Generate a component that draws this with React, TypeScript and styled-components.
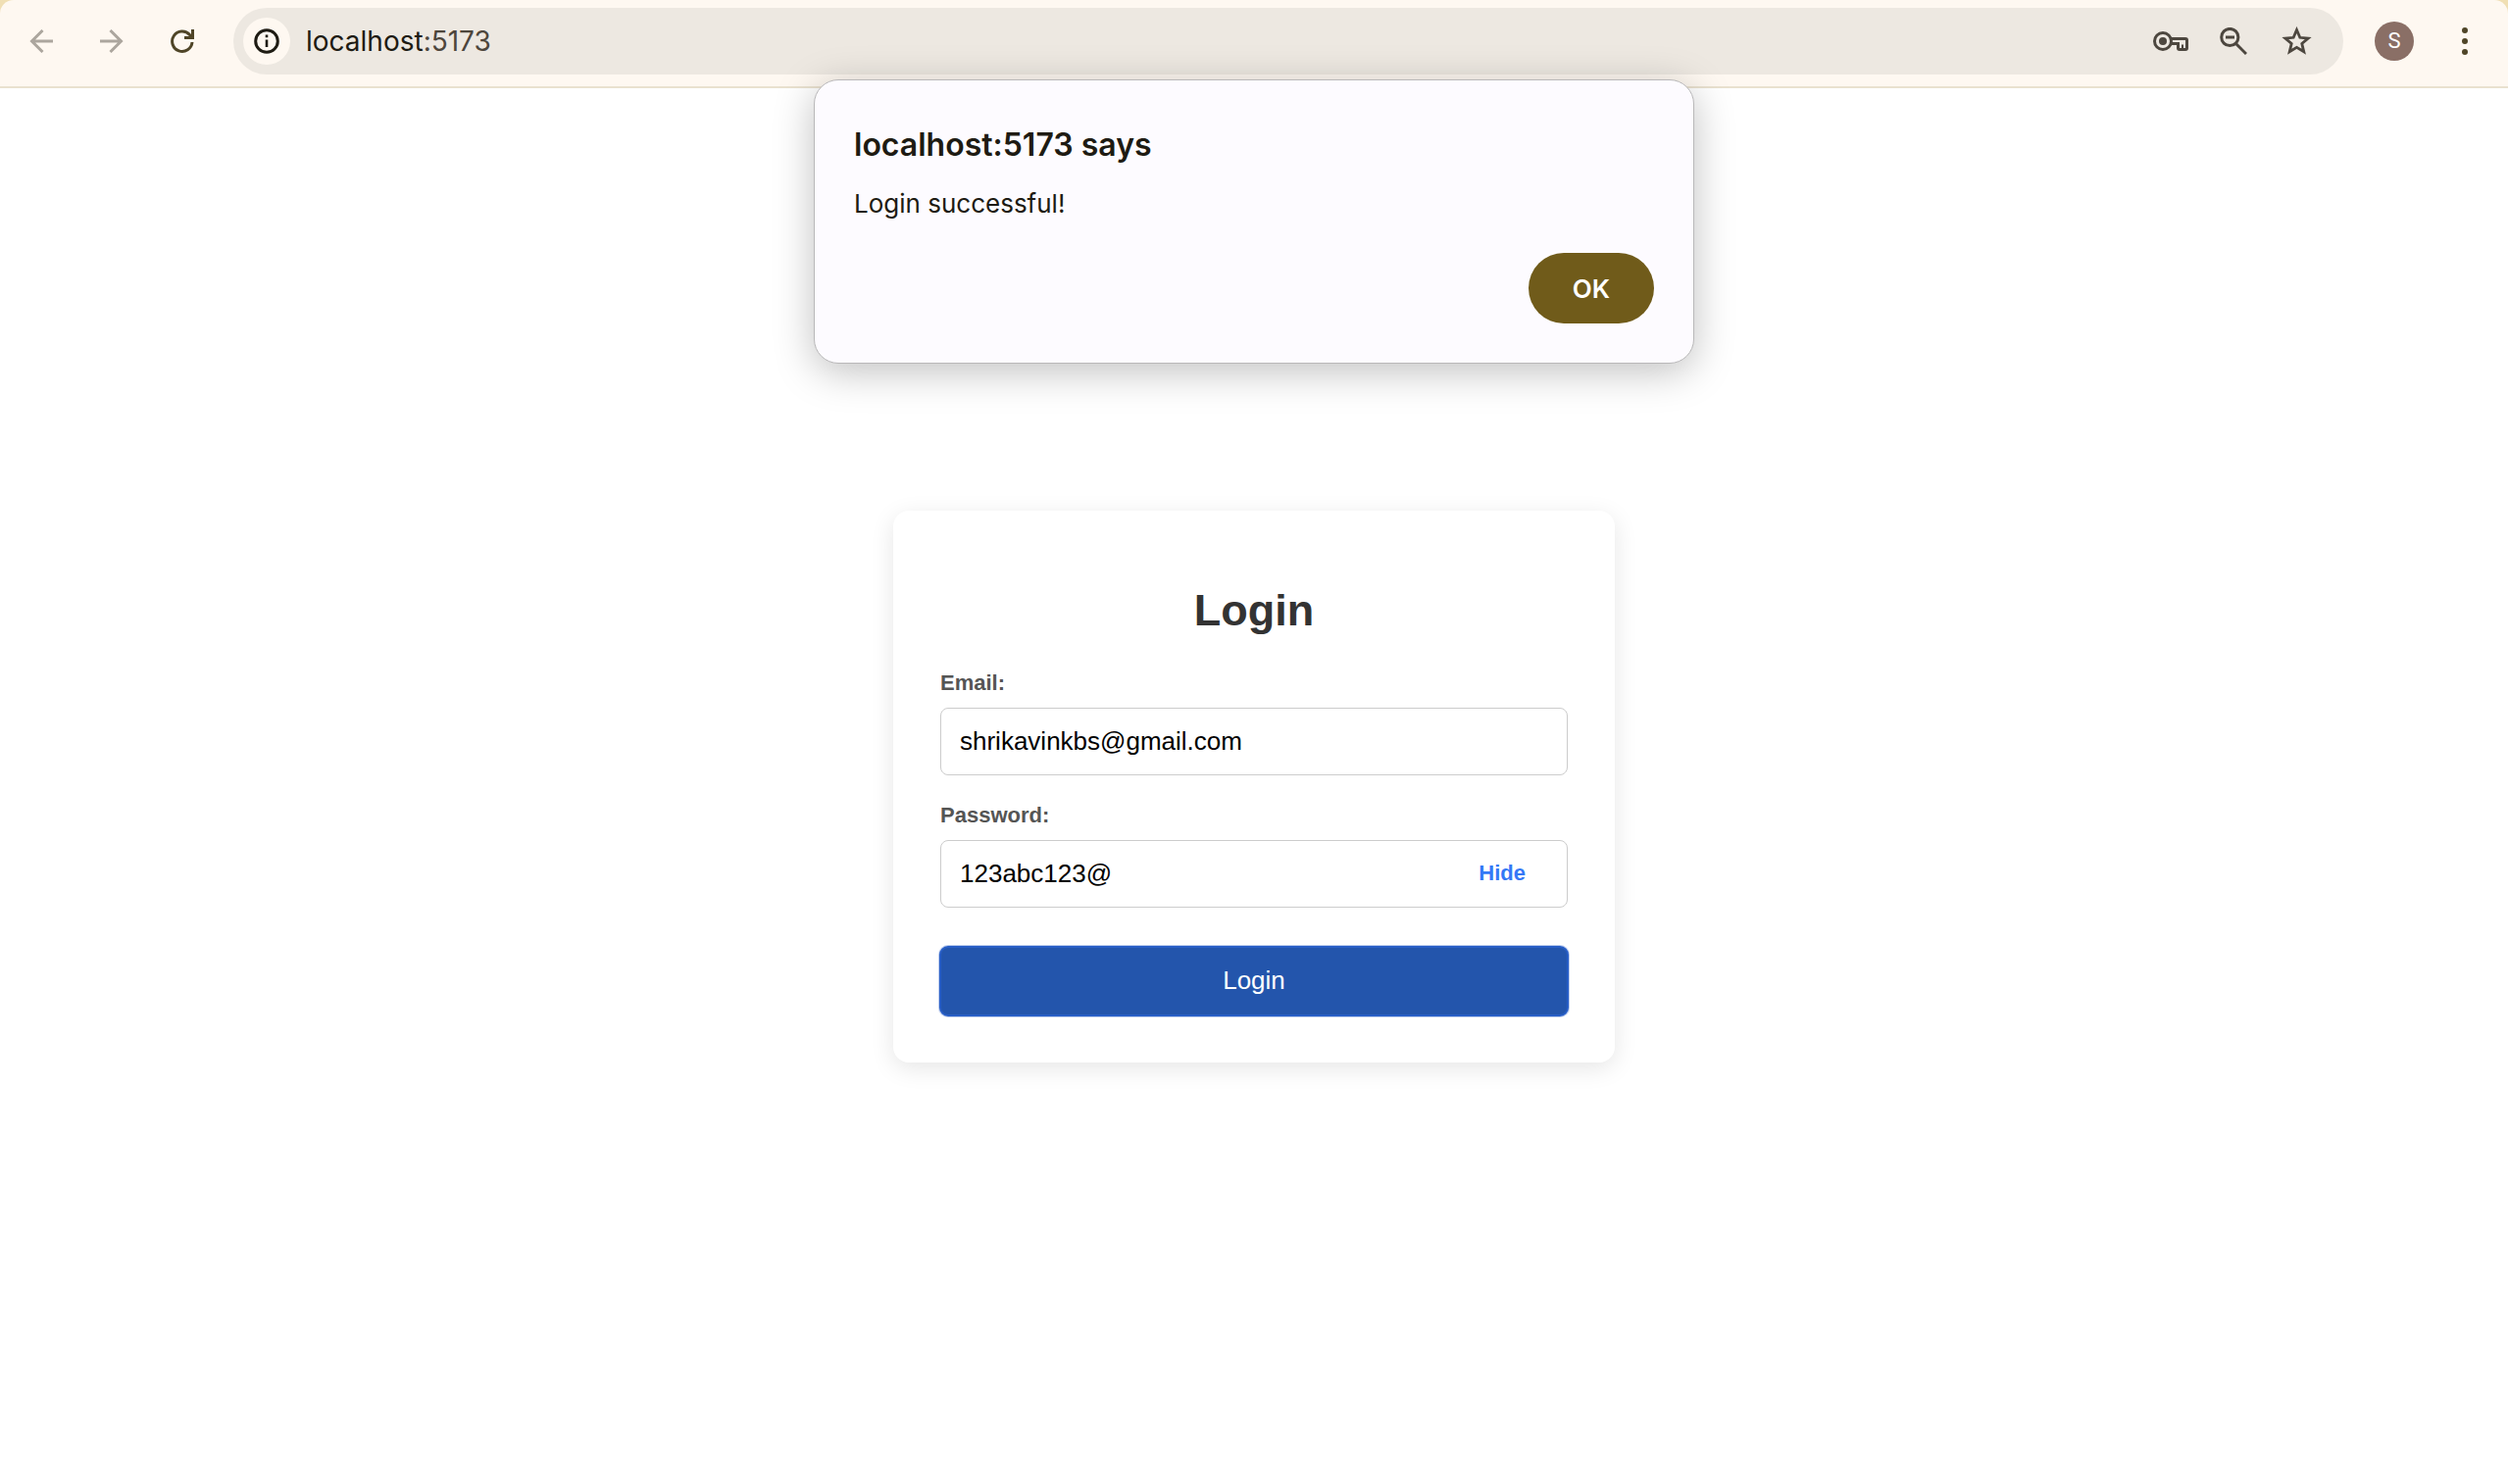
import React, { useId, useState } from "react";
import styled, { createGlobalStyle } from "styled-components";

const uiFont = `Inter, Roboto, "Liberation Sans", sans-serif`;
const pageFont = `"Liberation Sans", Arial, sans-serif`;

const GlobalStyle = createGlobalStyle`
  *, *::before, *::after { box-sizing: border-box; }
  body { margin: 0; background: #ffffff; font-family: ${pageFont}; }
  button, input { font: inherit; }
`;

const Window = styled.div`
  position: relative;
  display: flex;
  flex-direction: column;
  min-height: 100vh;
`;

const TabStripEdge = styled.div`
  background: #f0dfb4;
`;

const Toolbar = styled.header`
  display: flex;
  align-items: center;
  padding: 8px 20px 12px 18px;
  background: #fef8f1;
  border-bottom: 2px solid #e9e1cf;
  border-radius: 14px 14px 0 0;
  font-family: ${uiFont};
`;

const NavGroup = styled.nav`
  display: flex;
  gap: 24px;
  margin-right: 28px;
`;

const IconButton = styled.button<{ $tone?: string }>`
  display: grid;
  place-items: center;
  width: 48px;
  height: 48px;
  padding: 0;
  border: 0;
  border-radius: 50%;
  background: transparent;
  color: ${(p) => p.$tone ?? "#4d473f"};

  svg { display: block; }
`;

const Omnibox = styled.div`
  display: flex;
  flex: 1;
  align-items: center;
  height: 68px;
  padding: 0 24px 0 10px;
  border-radius: 34px;
  background: #ede8e1;
`;

const SiteInfo = styled(IconButton)`
  background: #fef8f1;
`;

const Address = styled.div`
  flex: 1;
  margin-left: 16px;
  font-size: 28px;
  line-height: 36px;
  color: #1e1b13;
`;

const Port = styled.span`
  color: #4d463c;
`;

const OmniboxActions = styled.div`
  display: flex;
  gap: 16px;
`;

const Avatar = styled.button`
  width: 40px;
  height: 40px;
  margin: 0 28px 0 32px;
  padding: 0;
  border: 0;
  border-radius: 50%;
  background: #8a6f66;
  color: #ffffff;
  font-family: Roboto, sans-serif;
  font-size: 22px;
  line-height: 40px;
`;

const Page = styled.main`
  display: flex;
  flex: 1;
  align-items: center;
  justify-content: center;
`;

const Card = styled.form`
  display: flex;
  flex-direction: column;
  width: 736px;
  max-width: 100%;
  padding: 48px;
  border-radius: 16px;
  background: #ffffff;
  box-shadow: 0 6px 24px rgba(0, 0, 0, 0.1);
`;

const Heading = styled.h2`
  margin: 28px 0 35px;
  color: #333333;
  font-size: 45px;
  line-height: 52px;
  text-align: center;
`;

const Field = styled.div`
  display: flex;
  flex-direction: column;
  gap: 13px;
  margin-bottom: 28px;
`;

const Label = styled.label`
  color: #555555;
  font-size: 22px;
  font-weight: 700;
  line-height: 25px;
`;

const InputFrame = styled.div`
  display: flex;
  align-items: center;
  height: 69px;
  padding: 0 19px;
  border: 1px solid #cccccc;
  border-radius: 8px;
`;

const TextInput = styled.input`
  flex: 1;
  min-width: 0;
  padding: 0;
  border: 0;
  outline: 0;
  background: transparent;
  color: #000000;
  font-size: 26px;
  line-height: 30px;
`;

const ToggleButton = styled.button`
  padding: 0 23px;
  border: 0;
  background: transparent;
  color: #3478f6;
  font-size: 22px;
  font-weight: 700;
  line-height: 26px;
`;

const SubmitButton = styled.button`
  height: 70px;
  margin-top: 12px;
  border: 0;
  border-radius: 8px;
  outline: 2px solid #285ec6;
  outline-offset: -1px;
  background: #2355ac;
  box-shadow: 0 0 0 2px rgba(40, 94, 198, 0.3);
  color: #ffffff;
  font-size: 26px;
`;

const Dialog = styled.section`
  position: absolute;
  top: 81px;
  left: 50%;
  width: 898px;
  max-width: 100%;
  transform: translateX(-50%);
  padding: 40px;
  border: 1px solid #b9b8b9;
  border-radius: 25px;
  background: #fdfbff;
  box-shadow: 0 8px 40px rgba(0, 0, 0, 0.25);
  color: #1e1b13;
  font-family: ${uiFont};
`;

const DialogTitle = styled.h1`
  margin: 6px 0 22px;
  font-size: 32px;
  font-weight: 600;
  line-height: 40px;
`;

const DialogText = styled.p`
  margin: 0 0 32px;
  font-size: 26px;
  line-height: 36px;
`;

const DialogActions = styled.div`
  display: flex;
  justify-content: flex-end;
`;

const OkButton = styled.button`
  width: 128px;
  height: 72px;
  border: 0;
  border-radius: 36px;
  background: #705b1a;
  color: #ffffff;
  font-size: 26px;
  font-weight: 600;
`;

const BackIcon = () => (
  <svg width="24" height="24" viewBox="0 0 24 24" fill="none" stroke="currentColor" strokeWidth="3">
    <path d="M24 12H2M13.500 1L2.500 12L13.500 23" />
  </svg>
);

const ForwardIcon = () => (
  <svg width="24" height="24" viewBox="0 0 24 24" fill="none" stroke="currentColor" strokeWidth="3">
    <path d="M0 12H22M10.500 1L21.500 12L10.500 23" />
  </svg>
);

const ReloadIcon = () => (
  <svg width="24" height="24" viewBox="0 0 24 24" fill="none" stroke="currentColor" strokeWidth="3">
    <path d="M22 13A10.200 10.200 0 1 1 19.500 5.500L22 8M22.500 0V8.500H14" />
  </svg>
);

const InfoIcon = () => (
  <svg width="26" height="26" viewBox="0 0 26 26" fill="none" stroke="currentColor" strokeWidth="3">
    <circle cx="13" cy="13" r="11.300" />
    <path d="M13 11.500V19M13 6.500V9.300" strokeWidth="2.600" />
  </svg>
);

const KeyIcon = () => (
  <svg width="36" height="22" viewBox="0 0 36 22" fill="none" stroke="currentColor" strokeWidth="3">
    <circle cx="10" cy="11" r="8.500" />
    <circle cx="10" cy="11" r="4" fill="currentColor" stroke="none" />
    <path d="M18 8.500H33Q34.500 8.500 34.500 10V18Q34.500 19.500 33 19.500H27Q25.500 19.500 25.500 18V13.500H18" />
    <path d="M30 14.500V19" strokeWidth="2" />
  </svg>
);

const ZoomOutIcon = () => (
  <svg width="28" height="28" viewBox="0 0 28 28" fill="none" stroke="currentColor" strokeWidth="3">
    <circle cx="10.300" cy="10" r="8.600" />
    <path d="M16.500 16.500L27 27M6 10H15" />
  </svg>
);

const StarIcon = () => (
  <svg width="31" height="30" viewBox="0 0 31 30" fill="none" stroke="currentColor" strokeWidth="2.800">
    <path d="M15.500 3.500L18.800 11.300L27.200 12L20.800 17.500L22.800 25.800L15.500 21.400L8.200 25.800L10.200 17.500L3.800 12L12.200 11.300Z" />
  </svg>
);

const MenuIcon = () => (
  <svg width="6" height="28" viewBox="0 0 6 28" fill="currentColor">
    <circle cx="3" cy="3" r="3" />
    <circle cx="3" cy="14" r="3" />
    <circle cx="3" cy="25" r="3" />
  </svg>
);

function BrowserToolbar() {
  return (
    <TabStripEdge>
      <Toolbar>
        <NavGroup>
          <IconButton $tone="#aca69e" aria-label="Back"><BackIcon /></IconButton>
          <IconButton $tone="#aca69e" aria-label="Forward"><ForwardIcon /></IconButton>
          <IconButton $tone="#4f4527" aria-label="Reload"><ReloadIcon /></IconButton>
        </NavGroup>
        <Omnibox>
          <SiteInfo $tone="#1e1b13" aria-label="View site information"><InfoIcon /></SiteInfo>
          <Address>localhost<Port>:5173</Port></Address>
          <OmniboxActions>
            <IconButton aria-label="Manage passwords"><KeyIcon /></IconButton>
            <IconButton aria-label="Zoom"><ZoomOutIcon /></IconButton>
            <IconButton aria-label="Bookmark this tab"><StarIcon /></IconButton>
          </OmniboxActions>
        </Omnibox>
        <Avatar>S</Avatar>
        <IconButton $tone="#4f4527" aria-label="Menu"><MenuIcon /></IconButton>
      </Toolbar>
    </TabStripEdge>
  );
}

function LoginForm({ onLogin }: { onLogin: () => void }) {
  const id = useId();
  const [email, setEmail] = useState("shrikavinkbs@gmail.com");
  const [password, setPassword] = useState("123abc123@");
  const [visible, setVisible] = useState(true);

  return (
    <Card
      onSubmit={(e) => {
        e.preventDefault();
        onLogin();
      }}
    >
      <Heading>Login</Heading>
      <Field>
        <Label htmlFor={`${id}-email`}>Email:</Label>
        <InputFrame>
          <TextInput
            id={`${id}-email`}
            type="email"
            value={email}
            onChange={(e) => setEmail(e.target.value)}
          />
        </InputFrame>
      </Field>
      <Field>
        <Label htmlFor={`${id}-password`}>Password:</Label>
        <InputFrame>
          <TextInput
            id={`${id}-password`}
            type={visible ? "text" : "password"}
            value={password}
            onChange={(e) => setPassword(e.target.value)}
          />
          <ToggleButton type="button" onClick={() => setVisible(!visible)}>
            {visible ? "Hide" : "Show"}
          </ToggleButton>
        </InputFrame>
      </Field>
      <SubmitButton type="submit">Login</SubmitButton>
    </Card>
  );
}

export default function App() {
  const [alertOpen, setAlertOpen] = useState(true);

  return (
    <>
      <GlobalStyle />
      <Window>
        <BrowserToolbar />
        <Page>
          <LoginForm onLogin={() => setAlertOpen(true)} />
        </Page>
        {alertOpen && (
          <Dialog role="alertdialog" aria-labelledby="alert-title" aria-describedby="alert-text">
            <DialogTitle id="alert-title">localhost:5173 says</DialogTitle>
            <DialogText id="alert-text">Login successful!</DialogText>
            <DialogActions>
              <OkButton type="button" onClick={() => setAlertOpen(false)}>OK</OkButton>
            </DialogActions>
          </Dialog>
        )}
      </Window>
    </>
  );
}
